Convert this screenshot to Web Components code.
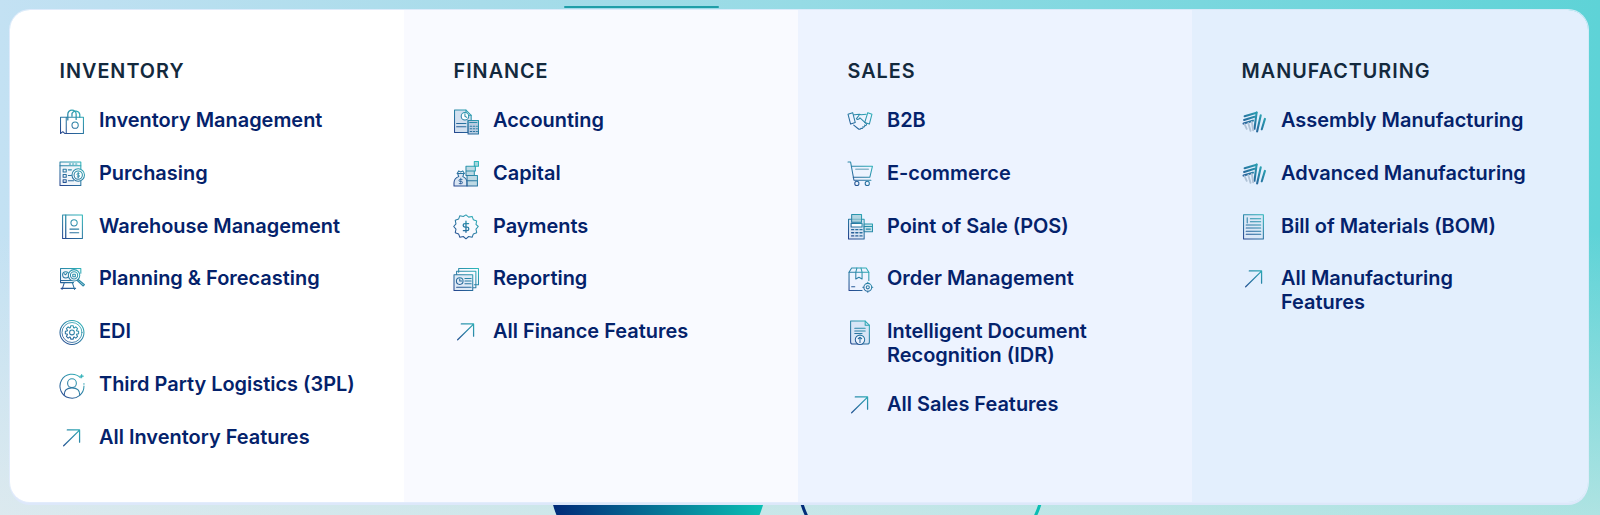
<!DOCTYPE html>
<html lang="en">
<head>
<meta charset="utf-8">
<title>Features menu</title>
<style>
html,body{margin:0;height:515px;overflow:hidden}
body{font-family:Inter,"Liberation Sans",sans-serif}
</style>
</head>
<body>
<page-stage>
  <mega-menu>
    <menu-column heading="INVENTORY" tone="#ffffff">
      <menu-item icon="bag">Inventory Management</menu-item>
      <menu-item icon="purchasing">Purchasing</menu-item>
      <menu-item icon="book">Warehouse Management</menu-item>
      <menu-item icon="planning">Planning &amp; Forecasting</menu-item>
      <menu-item icon="gear">EDI</menu-item>
      <menu-item icon="person">Third Party Logistics (3PL)</menu-item>
      <menu-item icon="arrow">All Inventory Features</menu-item>
    </menu-column>
    <menu-column heading="FINANCE" tone="#f9faff">
      <menu-item icon="accounting">Accounting</menu-item>
      <menu-item icon="capital">Capital</menu-item>
      <menu-item icon="payments">Payments</menu-item>
      <menu-item icon="reporting">Reporting</menu-item>
      <menu-item icon="arrow">All Finance Features</menu-item>
    </menu-column>
    <menu-column heading="SALES" tone="#edf3ff">
      <menu-item icon="handshake">B2B</menu-item>
      <menu-item icon="cart">E-commerce</menu-item>
      <menu-item icon="pos">Point of Sale (POS)</menu-item>
      <menu-item icon="box">Order Management</menu-item>
      <menu-item icon="doc">Intelligent Document Recognition (IDR)</menu-item>
      <menu-item icon="arrow">All Sales Features</menu-item>
    </menu-column>
    <menu-column heading="MANUFACTURING" tone="#e3effd">
      <menu-item icon="stripes">Assembly Manufacturing</menu-item>
      <menu-item icon="stripes">Advanced Manufacturing</menu-item>
      <menu-item icon="list">Bill of Materials (BOM)</menu-item>
      <menu-item icon="arrow">All Manufacturing Features</menu-item>
    </menu-column>
  </mega-menu>
</page-stage>

<template id="stage-tpl">
  <style>
    :host{display:block;position:relative;width:1600px;height:515px;overflow:hidden;box-sizing:border-box;padding:10px 12px 0 10px;
      background:
        linear-gradient(180deg,rgba(255,255,255,0) 45%,rgba(240,240,235,.55) 100%),
        linear-gradient(90deg,#c3e1f3 0%,#a8dcea 30%,#96dbe5 50%,#7ad7de 75%,#5ed3d7 100%);}
    .tab{position:absolute;left:564px;top:6px;width:155px;height:2px;background:#1f9ea8;border-radius:1px}
    svg{position:absolute;left:0;top:0}
    ::slotted(*){position:relative}
  </style>
  <svg width="1600" height="515" aria-hidden="true">
    <defs>
      <linearGradient id="fill" gradientUnits="userSpaceOnUse" x1="553" y1="0" x2="763" y2="0">
        <stop offset="0" stop-color="#012a78"/><stop offset="1" stop-color="#0bc0b4"/>
      </linearGradient>
      <linearGradient id="line" gradientUnits="userSpaceOnUse" x1="800" y1="0" x2="1042" y2="0">
        <stop offset="0" stop-color="#012a78"/><stop offset="1" stop-color="#0bc0b4"/>
      </linearGradient>
    </defs>
    <circle cx="658" cy="474" r="109.500" fill="url(#fill)"/>
    <circle cx="921" cy="463" r="126" fill="none" stroke="url(#line)" stroke-width="3"/>
  </svg>
  <div class="tab"></div>
  <slot></slot>
</template>

<template id="menu-tpl">
  <style>
    :host{display:grid;grid-template-columns:repeat(3,394px) 1fr;height:492px;border-radius:20px;overflow:hidden;
      box-shadow:0 0 0 1px rgba(226,236,252,.9),0 3px 0 0 #dde8fa}
  </style>
  <slot></slot>
</template>

<template id="col-tpl">
  <style>
    :host{display:flex;flex-direction:column;box-sizing:border-box;padding:50px 20px 0 49px;min-width:0;background:var(--tone,#fff)}
    h2{margin:-.6px 0 24.600px .5px;font:600 19.800px/24px Inter,"Liberation Sans",sans-serif;letter-spacing:1px;color:#13293d}
    .rows{display:flex;flex-direction:column;gap:24.500px}
  </style>
  <h2></h2>
  <div class="rows"><slot></slot></div>
</template>

<template id="item-tpl">
  <style>
    :host{display:flex;align-items:flex-start;gap:15px;min-height:28.400px;font:600 19.950px/23.600px Inter,"Liberation Sans",sans-serif;color:#04226b;width:300px}
    .ico{flex:none;width:25px;height:25px;margin-top:.5px}
    .t{margin-top:.8px}
    svg{display:block;width:25px;height:25px;margin-left:1px;overflow:visible;filter:blur(.3px);opacity:.88}
  </style>
  <div class="ico"></div>
  <div class="t"><slot></slot></div>
</template>

<script>
function gear(cx,cy,r1,r2,n){
  let d='';
  const step=Math.PI*2/n;
  for(let i=0;i<n;i++){
    const a=i*step;
    const pts=[[r1,a-step*.42],[r2,a-step*.24],[r2,a+step*.24],[r1,a+step*.42]];
    pts.forEach((p,j)=>{
      const x=(cx+p[0]*Math.sin(p[1])).toFixed(2), y=(cy-p[0]*Math.cos(p[1])).toFixed(2);
      d+=(i===0&&j===0?'M':'L')+x+' '+y;
    });
  }
  return d+'Z';
}
const ICONS = {
  bag:`<path d="M6 8H22.500V23.500H6z"/><path d="M6 8H.5V23.500L2.700 21.800 4.500 23.500H6"/><path d="M7.500 10.500V5a4 4 0 0 1 8 0v5" stroke-width="1.200"/><path d="M11.500 7V4.200a4 4 0 0 1 7.500 1V8" stroke-width="1.200"/><circle cx="14.500" cy="15.500" r="3"/>`,
  purchasing:`<path d="M20 8V1H0V23.500H20V19" fill="#eef4fa"/><path d="M0 4.500H20M9 2.800h1.200M12 2.800h1.200M15 2.800h1.200"/><path d="M3 8h3v2.500H3zM3 13h3v2.500H3zM3 18h3v2.500H3zM8 8.500h3M8 14h3M8 19h5"/><circle cx="17.500" cy="13.500" r="6" fill="#fff"/><circle cx="17.500" cy="13.500" r="4"/><path d="M17.500 11v5"/><path d="M18.500 12H17a.8.8 0 0 0 0 1.600h1a.8.8 0 0 1 0 1.600h-1.500" stroke-width=".7"/>`,
  book:`<path d="M2.500 1H21.500V23.500H2.500z"/><path d="M5.500 1V23.500" stroke-width="1.200"/><circle cx="13.500" cy="8.500" r="3"/><path d="M9.500 14.500H18M9.500 18H18"/>`,
  planning:`<path d="M20 6V1.500H.5V15H13" fill="#edf4fa"/><path d="M.5 13H12"/><path d="M4 15.500 2 21.500M12 15.500l2 6M1 20.500h14"/><circle cx="5.500" cy="7.500" r="3"/><path d="M4 6.500l1.500 1 1-1.500"/><circle cx="13.500" cy="8" r="5.500" fill="#fff"/><circle cx="13.500" cy="8" r="3.500"/><path d="M12.300 7h2.400v2.400h-2.400z"/><path d="M17.500 12l6 5-1.200 1.200-5.700-5.200" stroke-width="1.100"/>`,
  gear:`<circle cx="11.500" cy="12" r="11.500"/><circle cx="11.500" cy="12" r="9.600" stroke-width=".8"/><path d="${gear(11.5,12,4.800,6.500,8)}"/><circle cx="11.500" cy="12" r="2.300"/>`,
  person:`<path d="M19.500 4.400A11.500 11.500 0 1 0 23 12.500"/><path d="M23 10v.8"/><path d="M20.800 1.500v3M19.300 3h3"/><circle cx="11.500" cy="9.800" r="4.200"/><path d="M4 21c0-4.300 3-6.700 7.500-6.700S19 16.700 19 21"/>`,
  arrow:`<path d="M3.500 19 18.800 4M7 3.800H18.800V15.500" stroke-width="1.200"/>`,
  accounting:`<path d="M.5 1h11l5 5v5h-3v11.500H.5z" fill="#a9c4de" fill-opacity=".55"/><path d="M11.500 1v5h5"/><circle cx="10.500" cy="7" r="3.600" fill="#fff"/><path d="M10.500 4.600V7l1.800 1"/><path d="M2.500 14h9M2.500 17h9"/><path d="M13.500 11h10v13h-10z" fill="#7fa3c7" fill-opacity=".6"/><path d="M15 13h7M15.500 16.500H17M18.500 16.500H20M21.500 16.500h1M15.500 19H17M18.500 19H20M21.500 19h1M15.500 21.500H17M18.500 21.500H20M21.500 21.500h1"/>`,
  capital:`<path d="M3.500 12h6l-1 3c2.500 1 4 3 4 6v3H0v-3c0-3 1.500-5 4.500-6z" fill="#d7e4f2"/><path d="M3 12l1.500-2.500 2 1 2-1L10 12"/><path d="M6.500 16.500V22M7.800 17.700h-2a1 1 0 0 0 0 2h1.400a1 1 0 0 1 0 2H5" stroke-width=".8"/><path d="M11.500 5h9v4.500h-9zM11.500 9.500h8V14h-8zM12.500 14h10v5h-10zM12.500 19h10v5h-10z" fill="#7fb6c7" fill-opacity=".55"/><path d="M19.500.5h4V5h-4z" fill="#5fb6c0" fill-opacity=".6"/>`,
  payments:`<path d="M11.500 .8l2.600 2.200 3.300-.7 1.200 3.200 3.200 1.200-.7 3.300 2.200 2-2.200 2.600.7 3.300-3.200 1.200-1.200 3.200-3.300-.7-2.600 2.200-2.600-2.200-3.300.7-1.200-3.200-3.200-1.200.7-3.300-2.200-2.600 2.200-2.600-.7-3.300 3.200-1.200 1.200-3.200 3.300.7z"/><path d="M11.500 7v10.500M14 9.200h-3.500a1.700 1.700 0 0 0 0 3.400h2a1.700 1.700 0 0 1 0 3.400H9" stroke-width="1.300"/>`,
  reporting:`<path d="M4.500 5V1.500h19V17h-4"/><path d="M2.500 8V4H21v16h-2.500"/><path d="M0 7.500h18v15H0z" fill="#dce8f5"/><circle cx="5.500" cy="13.500" r="3.200"/><path d="M5.500 11.500v2h2"/><path d="M10.500 11h6M10.500 13.500h6M10.500 16h6M2.500 19.500h14"/>`,
  handshake:`<path d="M0 5l4.500-1.500L7 13l-4.500 1.500zM23 5l-4-1.500L16 13l4.500 1.500z"/><path d="M5.500 5.500c2 0 3.500-.5 5.500-.5l1.500.5 5-.5"/><path d="M11 5.500 8 9.500c1.200 1 2.700.5 3.500-1l6 5.500c1 1-.5 2.500-1.500 1.500M16 15.500c.7 1-.7 2.300-1.700 1.500M14.300 17c.6 1-.7 2.200-1.700 1.500M12.500 18.500c-.5 1.500-2 1-3 .2l-4-3.200"/>`,
  cart:`<path d="M0 1h2.500l3.200 17.500H22"/><path d="M3.300 5h20.200L21 15.500H5"/><path d="M7.500 8h12" stroke-width="1.400" stroke="#7fb0c6"/><circle cx="8.500" cy="21.500" r="2"/><circle cx="18.500" cy="21.500" r="2"/>`,
  pos:`<path d="M.5 5h15v19H.5z" fill="#c9dbec" fill-opacity=".6"/><path d="M3.500.5H13V8H3.500z" fill="#8fc3cf" fill-opacity=".7"/><path d="M3 9h10.500v3.500H3z" fill="#fff"/><path d="M3.500 15h2M7.500 15h2M11.500 15h2M3.500 18h2M7.500 18h2M11.500 18h2M3.500 21h2M7.500 21h2M11.500 21h2" stroke-width="1.300"/><path d="M15.500 9.500h8V17h-8z" fill="#bfe0e8"/><path d="M15.500 12h8M17.500 14.500h4"/>`,
  box:`<path d="M13.500 22.500H1V5l2.500-4h14L20 5v8"/><path d="M1 5h19M8.500 1l-1 4v6.500l3-1.700 3 1.700V5l-1-4"/><path d="M3.500 19h3"/><circle cx="19" cy="19.500" r="3.800"/><circle cx="19" cy="19.500" r="1.500"/><path d="M19 14.700v1M19 23.300v1M14.200 19.500h1M22.800 19.500h1"/>`,
  doc:`<path d="M2.500 1h14l4 4v16a2 2 0 0 1-2 2h-14a2 2 0 0 1-2-2z" fill="#d4e4f5"/><path d="M16.500 1v4h4"/><path d="M6.500 8h10M6.500 10.500h10M6.500 13h7"/><circle cx="11.500" cy="19" r="4.500" fill="#eef4ff"/><path d="M11.500 21.500v-5M9.800 18l1.700-1.500 1.700 1.500"/>`,
  stripes:`<g stroke-width="2"><path d="M2.500 7 14 3.500M2 10.500 12 7.500M1.500 14l9-2.800"/><path d="M14 3.500 12 19"/><path d="M18 6l-3.500 15.500"/><path d="M22 9.500 19 19.500"/></g><path d="M2.500 14.500 4.500 19M6 13.500l2.200 7.500M9.500 12.500l1.200 8" stroke="#a9bdd2" stroke-width="1.800"/>`,
  list:`<path d="M1.500 .8h19V24h-19z" fill="#d3e2f4" fill-opacity=".6"/><path d="M8 4.500h10M8 7.500h10M4 10.500h14M4 13.500h14M4 16.500h14M4 19.500h14"/><path d="M5 3.500v5"/>`
};

function mount(el, id){
  const root = el.attachShadow({mode:'open'});
  root.appendChild(document.getElementById(id).content.cloneNode(true));
  return root;
}
customElements.define('page-stage', class extends HTMLElement{
  constructor(){super();mount(this,'stage-tpl');}
});
customElements.define('mega-menu', class extends HTMLElement{
  constructor(){super();mount(this,'menu-tpl');}
});
customElements.define('menu-column', class extends HTMLElement{
  connectedCallback(){
    const root = this.shadowRoot || mount(this,'col-tpl');
    root.querySelector('h2').textContent = this.getAttribute('heading');
    this.style.setProperty('--tone', this.getAttribute('tone'));
  }
});
customElements.define('menu-item', class extends HTMLElement{
  connectedCallback(){
    const root = this.shadowRoot || mount(this,'item-tpl');
    const name = this.getAttribute('icon');
    root.querySelector('.ico').innerHTML =
      `<svg viewBox="0 0 24 24" fill="none" stroke="url(#g)" stroke-width="1" stroke-linejoin="round" stroke-linecap="round" aria-hidden="true">
        <defs><linearGradient id="g" gradientUnits="userSpaceOnUse" x1="22" y1="0" x2="3" y2="24">
          <stop offset="0" stop-color="#14b3b3"/><stop offset="1" stop-color="#0a2f80"/>
        </linearGradient></defs>${ICONS[name]}</svg>`;
  }
});
</script>
</body>
</html>
